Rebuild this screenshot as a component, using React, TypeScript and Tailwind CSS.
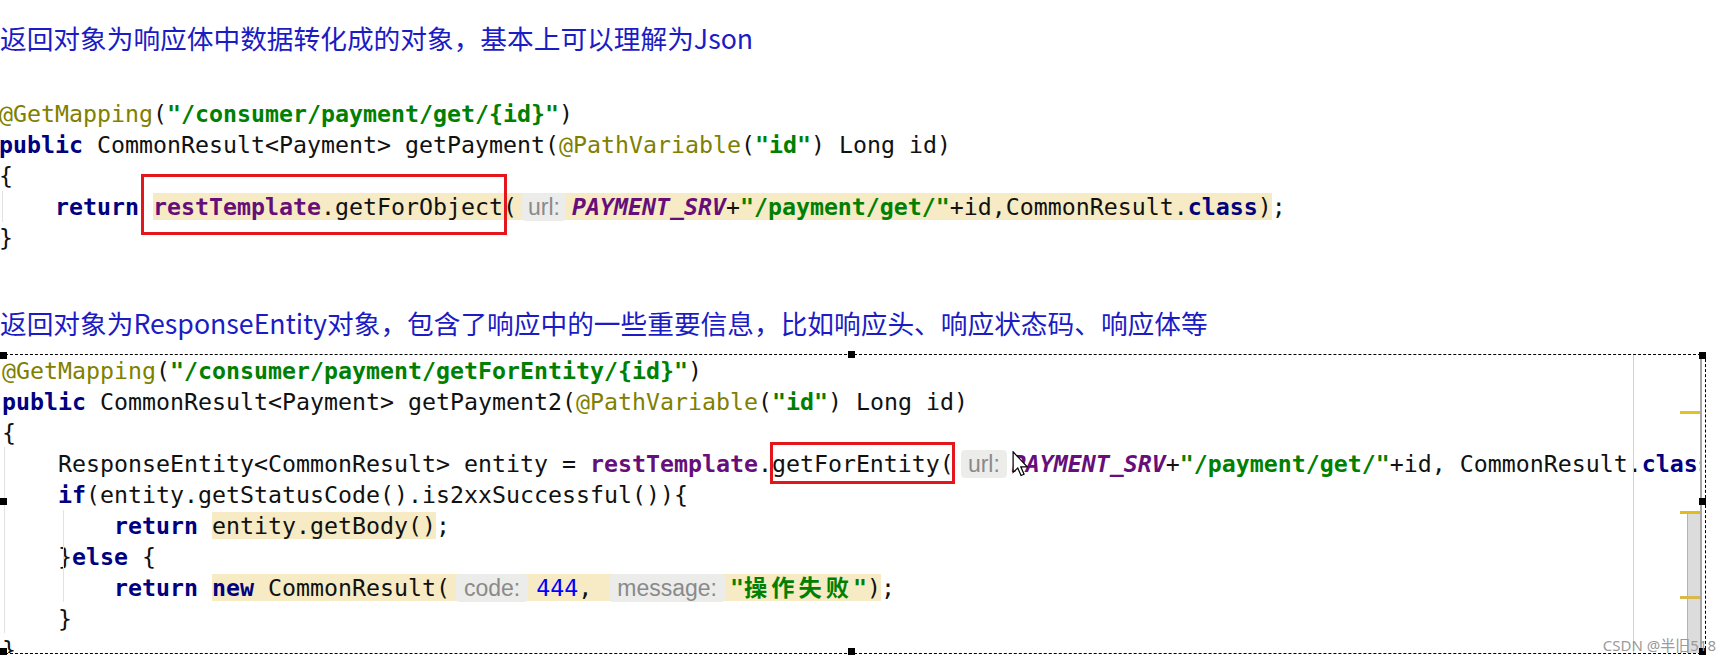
import React from "react";

type P = { children?: React.ReactNode };

const A = ({ children }: P) => <span className="text-[#808000]">{children}</span>;
const S = ({ children }: P) => <span className="font-bold text-[#008000]">{children}</span>;
const K = ({ children }: P) => <span className="font-bold text-[#000080]">{children}</span>;
const F = ({ children }: P) => <span className="font-bold text-[#660e7a]">{children}</span>;
const FI = ({ children }: P) => <span className="font-bold italic text-[#660e7a]">{children}</span>;
const N = ({ children }: P) => <span className="text-[#0000ff]">{children}</span>;
const HL = ({ children }: P) => <span className="bg-[#f6ebc4]">{children}</span>;

const Hint = ({ children, cls }: P & { cls: string }) => (
  <span
    className={
      "font-['Liberation_Sans',sans-serif] text-[23px] text-[#8a8a8a] bg-[#ececea] rounded-[4px] py-[1px] " + cls
    }
  >
    {children}
  </span>
);

const L = ({ children }: P) => <div className="h-[31px] leading-[31px] whitespace-pre">{children}</div>;

const Cursor = () => (
  <svg
    className="absolute left-0 top-[1px]"
    width="17"
    height="26"
    viewBox="0 0 12 19"
  >
    <path
      d="M0.6 0.6 V15.6 L4 12.4 L6.4 17.9 L8.6 17 L6.2 11.6 H10.9 Z"
      fill="#ffffff"
      stroke="#000000"
      strokeWidth="0.9"
      strokeLinejoin="miter"
    />
  </svg>
);

const Handle = ({ cls }: { cls: string }) => <div className={"absolute w-[7px] h-[7px] bg-black " + cls} />;

export default function App() {
  const code = "font-['DejaVu_Sans_Mono','Noto_Sans_CJK_SC',monospace] text-[23.25px] text-[#111111]";
  const title =
    "h-[32px] leading-[32px] whitespace-nowrap font-['Noto_Sans_CJK_SC',sans-serif] text-[26.7px] text-[#1c1cc4]";
  return (
    <div className="relative w-[1733px] h-[663px] bg-white overflow-hidden flex flex-col">
      <div className={"mt-[22px] " + title}>返回对象为响应体中数据转化成的对象，基本上可以理解为Json</div>

      <div className={"relative mt-[44px] ml-[-1px] " + code}>
        <div className="absolute left-[3px] top-[93px] h-[31px] w-px bg-[#e2e2e2]" />
        <L>
          <A>@GetMapping</A>(<S>"/consumer/payment/get/{"{"}id{"}"}"</S>)
        </L>
        <L>
          <K>public</K> CommonResult&lt;Payment&gt; getPayment(<A>@PathVariable</A>(<S>"id"</S>) Long id)
        </L>
        <L>{"{"}</L>
        <L>
          {"    "}
          <K>return</K>{" "}
          <HL>
            <span className="relative">
              <F>restTemplate</F>.getForObject(
              <span className="absolute -left-[12px] right-[10px] -top-[19px] -bottom-[15px] border-[3px] border-[#e3161c]" />
            </span>
            <Hint cls="ml-[5px] mr-[6px] px-[6px]">url:</Hint>
            <FI>PAYMENT_SRV</FI>+<S>"/payment/get/"</S>+id,CommonResult.<K>class</K>)
          </HL>
          ;
        </L>
        <L>{"}"}</L>
      </div>

      <div className={"mt-[54px] " + title}>
        返回对象为ResponseEntity对象，包含了响应中的一些重要信息，比如响应头、响应状态码、响应体等
      </div>

      <div className="relative mt-[15px] h-[300px] w-[1706px] border-t border-r border-b border-dashed border-black flex">
        <div className={"relative w-[1700px] h-full overflow-hidden pl-[2px] " + code}>
          <div className="absolute left-[4px] top-[92px] h-[186px] w-px bg-[#e2e2e2]" />
          <div className="absolute left-[63px] top-[155px] h-[92px] w-px bg-[#e2e2e2]" />
          <div className="absolute left-[1633px] top-0 bottom-0 w-px bg-[#d2d2d2]" />

          <L>
            <A>@GetMapping</A>(<S>"/consumer/payment/getForEntity/{"{"}id{"}"}"</S>)
          </L>
          <L>
            <K>public</K> CommonResult&lt;Payment&gt; getPayment2(<A>@PathVariable</A>(<S>"id"</S>) Long id)
          </L>
          <L>{"{"}</L>
          <L>
            {"    ResponseEntity<CommonResult> entity = "}
            <F>restTemplate</F>.
            <span className="relative">
              getForEntity(
              <span className="absolute -left-[2px] -right-[1px] -top-[8px] -bottom-[7px] border-[3px] border-[#e3161c]" />
            </span>
            <Hint cls="ml-[7px] mr-[5px] px-[7px]">url:</Hint>
            <span className="relative">
              <FI>PAYMENT_SRV</FI>
              <Cursor />
            </span>
            +<S>"/payment/get/"</S>+id, CommonResult.<K>class</K>);
          </L>
          <L>
            {"    "}
            <K>if</K>(entity.getStatusCode().is2xxSuccessful()){"{"}
          </L>
          <L>
            {"        "}
            <K>return</K> <HL>entity.getBody()</HL>;
          </L>
          <L>
            {"    }"}
            <K>else</K> {"{"}
          </L>
          <L>
            {"        "}
            <K>return</K>{" "}
            <HL>
              <K>new</K> CommonResult(
              <Hint cls="ml-[6px] mr-[8px] px-[8px]">code:</Hint>
              <N>444</N>,{" "}
              <Hint cls="ml-[3px] mr-[5px] px-[8px]">message:</Hint>
              <S>
                "<span className="tracking-[4px]">操作失败</span>"
              </S>
              )
            </HL>
            ;
          </L>
          <L>{"    }"}</L>
          <L>{"}"}</L>

          <div className="absolute left-[1687px] top-[157px] bottom-0 w-[13px] bg-[#dcdcdc] border-l border-[#b4b4b4]" />
          <div className="absolute left-[1680px] top-[56px] w-[20px] h-[3px] bg-[#e4c226]" />
          <div className="absolute left-[1680px] top-[156px] w-[20px] h-[3px] bg-[#e0bd1a]" />
          <div className="absolute left-[1680px] top-[241px] w-[20px] h-[3px] bg-[#d8b94a]" />
        </div>
        <div className="w-[2px] h-full bg-[#a6a6a6]" />

        <Handle cls="left-0 -top-[3px]" />
        <Handle cls="left-[848px] -top-[4px]" />
        <Handle cls="left-[1699px] -top-[3px]" />
        <Handle cls="left-0 top-[143px]" />
        <Handle cls="left-[1699px] top-[143px]" />
        <Handle cls="left-0 top-[293px]" />
        <Handle cls="left-[848px] top-[293px]" />
        <Handle cls="left-[1699px] top-[293px]" />
      </div>

      <div className="absolute right-[17px] bottom-[8px] font-['Noto_Sans','Noto_Sans_CJK_SC',sans-serif] text-[15px] leading-[20px] text-[#9a9a9a] whitespace-nowrap">
        CSDN @半旧518
      </div>
    </div>
  );
}
